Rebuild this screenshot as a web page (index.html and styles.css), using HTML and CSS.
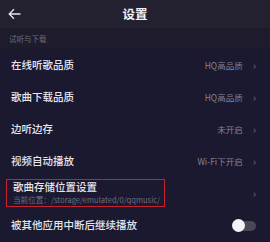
FILE: index.html
```html
<!DOCTYPE html>
<html>
<head>
<meta charset="utf-8">
<link rel="stylesheet" href="styles.css">
</head>
<body>
<div class="page">
  <header class="header">
    <svg class="back" width="13" height="12" viewBox="0 0 13 12"><path d="M12.5 6H1.2M6 1.2L1.2 6L6 10.8" fill="none" stroke="#e6e6ee" stroke-width="1.3"/></svg>
    <div class="title">设置</div>
  </header>
  <div class="section">试听与下载</div>
  <div class="row"><span class="label">在线听歌品质</span><span class="value">HQ高品质</span><span class="chev">›</span></div>
  <div class="row"><span class="label">歌曲下载品质</span><span class="value">HQ高品质</span><span class="chev">›</span></div>
  <div class="row"><span class="label">边听边存</span><span class="value">未开启</span><span class="chev">›</span></div>
  <div class="row"><span class="label">视频自动播放</span><span class="value">Wi-Fi下开启</span><span class="chev">›</span></div>
  <div class="row row-store">
    <div class="store-box">
      <div class="label">歌曲存储位置设置</div>
      <div class="sub">当前位置：/storage/emulated/0/qqmusic/</div>
    </div>
    <span class="chev">›</span>
  </div>
  <div class="row row-last"><span class="label">被其他应用中断后继续播放</span><span class="toggle"><span class="knob"></span></span></div>
</div>
</body>
</html>
```
FILE: styles.css
```css
html, body { margin: 0; padding: 0; }
body { width: 270px; height: 242px; overflow: hidden; background: #1a1930; font-family: "Noto Sans CJK SC", "Noto Sans", sans-serif; }
.page { display: flex; flex-direction: column; }
.header { height: 28px; background: #23212f; position: relative; display: flex; align-items: center; justify-content: center; }
.back { position: absolute; left: 8px; top: 8px; }
.title { color: #f2f2f6; font-size: 12.5px; font-weight: 700; line-height: 1; }
.section { height: 21px; background: #1e1c2c; color: #6d6b7c; font-size: 7.5px; display: flex; align-items: center; padding-left: 9px; }
.row { height: 32px; display: flex; align-items: center; padding: 0 14px 0 11px; }
.label { color: #e6e5ee; font-size: 10.5px; font-weight: 500; line-height: 1; flex: 1; }
.value { color: #858394; font-size: 8.5px; margin-right: 10px; }
.chev { color: #6e6c7d; font-size: 11px; line-height: 1; }
.row-store { padding-left: 6px; }
.store-box { flex: 0 0 auto; width: 151px; height: 26px; border: 1.5px solid #c8202c; padding: 0 0 0 6px; display: flex; flex-direction: column; justify-content: center; gap: 3px; margin-right: auto; }
.store-box .label { flex: none; }
.sub { color: #6f6d7e; font-size: 7.6px; line-height: 1; }
.row-last { height: 33px; padding-right: 14px; }
.toggle { width: 23px; height: 10px; background: #4a4858; border-radius: 5px; position: relative; }
.knob { position: absolute; left: -1px; top: -1.5px; width: 13px; height: 13px; border-radius: 50%; background: #f4f4f8; }
```
